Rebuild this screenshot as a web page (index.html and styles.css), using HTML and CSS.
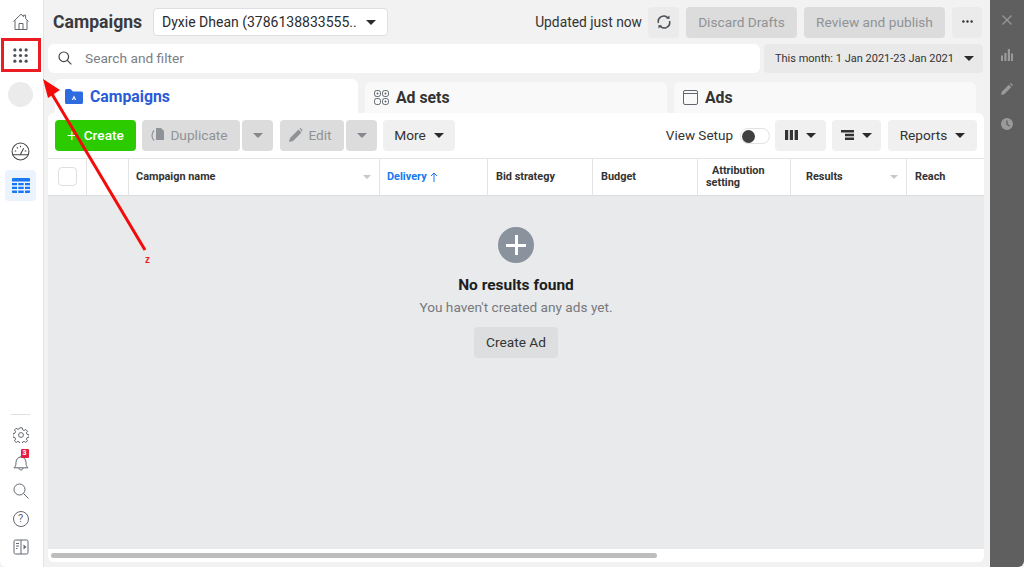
FILE: index.html
```html
<!DOCTYPE html>
<html lang="en">
<head>
<meta charset="utf-8">
<title>Campaigns</title>
<link rel="stylesheet" href="styles.css">
</head>
<body>
<div class="app">
  <nav class="rail">
    <div class="rail-top">
      <svg class="ic home" viewBox="0 0 18 18"><path d="M1.500 8.500 9 1.200l2.600 2.500V2.200h2v3.400l2.900 2.900M3 7.500v9h12v-9M7 16.500v-6h4v6" /></svg>
      <svg class="ic apps" viewBox="0 0 16 16"><g><circle cx="2" cy="2" r="1.700"/><circle cx="8" cy="2" r="1.700"/><circle cx="14" cy="2" r="1.700"/><circle cx="2" cy="8" r="1.700"/><circle cx="8" cy="8" r="1.700"/><circle cx="14" cy="8" r="1.700"/><circle cx="2" cy="14" r="1.700"/><circle cx="8" cy="14" r="1.700"/><circle cx="14" cy="14" r="1.700"/></g></svg>
      <div class="avatar"></div>
      <svg class="ic gauge" viewBox="0 0 18 18"><circle cx="9" cy="9" r="8"/><path d="M1.500 12h15M9 11.500 12 6M3.500 8.500h1.500M13 8.500h1.500M9 3.500V5M5.500 5l1 1"/></svg>
      <div class="rail-active">
        <svg class="table-ic" viewBox="0 0 18 15"><path d="M0 1a1 1 0 0 1 1-1h16a1 1 0 0 1 1 1v2.500H0zM0 5h5v2.300H0zM6.300 5h5.400v2.300H6.300zM13 5h5v2.300h-5zM0 8.800h5v2.300H0zM6.300 8.800h5.400v2.300H6.300zM13 8.800h5v2.300h-5zM0 12.600h5V15H1a1 1 0 0 1-1-1zM6.300 12.600h5.400V15H6.300zM13 12.600h5V14a1 1 0 0 1-1 1h-4z"/></svg>
      </div>
    </div>
    <div class="rail-bottom">
      <div class="rail-sep"></div>
      <svg class="ic small" viewBox="0 0 16 16"><circle cx="8" cy="8" r="2.400"/><path d="M6.800.8h2.400l.4 2 1.500.7 1.800-1 1.600 1.700-1.100 1.700.7 1.500 2 .4v2.400l-2 .4-.7 1.500 1.100 1.700-1.700 1.600-1.700-1-1.500.6-.4 2H6.800l-.4-2-1.500-.6-1.700 1-1.700-1.600 1.100-1.700-.7-1.500-2-.4V6.600l2-.4.7-1.500-1.100-1.700 1.600-1.700 1.800 1 1.500-.7z"/></svg>
      <div class="bell">
        <svg class="ic small" viewBox="0 0 16 16"><path d="M1 12.800c1.400-1.200 2-2.600 2-5.300C3 4.200 5.200 2 8 2s5 2.200 5 5.500c0 2.700.6 4.100 2 5.300zM6 13c0 1.200.9 2 2 2s2-.8 2-2M8 2V.8"/></svg>
        <span class="badge">3</span>
      </div>
      <svg class="ic small" viewBox="0 0 16 16"><circle cx="6.500" cy="6.500" r="5.500"/><path d="m10.500 10.500 5 5" /></svg>
      <div class="help">?</div>
      <svg class="ic small" viewBox="0 0 16 16"><rect x="1" y="1" width="14" height="14" rx="1.500"/><path d="M8 1v14M3 4.500h3M3 7h3M3 9.500h1.500"/><path class="fill" d="m10.500 5.500 3 2.500-3 2.500z"/></svg>
    </div>
  </nav>

  <main class="main">
    <header class="topbar">
      <h1 class="title">Campaigns</h1>
      <div class="account"><span class="account-name">Dyxie Dhean (3786138833555..</span><span class="caret dark"></span></div>
      <div class="top-actions">
        <span class="updated">Updated just now</span>
        <button class="btn btn-refresh"><svg class="refresh" viewBox="0 0 14 14"><path d="M1.500 8A5.500 5.500 0 0 1 11 3M12.500 6A5.500 5.500 0 0 1 3 11"/><path class="fill" d="m9 3.500 3.500.5V.6zM5 10.500 1.500 10v3.400z"/></svg></button>
        <button class="btn btn-disabled discard">Discard Drafts</button>
        <button class="btn btn-disabled review">Review and publish</button>
        <button class="btn btn-dots"><svg class="dots" viewBox="0 0 12 3"><circle cx="1.500" cy="1.500" r="1.300"/><circle cx="6" cy="1.500" r="1.300"/><circle cx="10.500" cy="1.500" r="1.300"/></svg></button>
      </div>
    </header>

    <div class="filterbar">
      <div class="search">
        <svg class="search-ic" viewBox="0 0 14 14"><circle cx="5.800" cy="5.800" r="4.800"/><path d="m9.300 9.300 4 4"/></svg>
        <span>Search and filter</span>
      </div>
      <div class="date"><span>This month: 1 Jan 2021-23 Jan 2021</span><span class="caret dark"></span></div>
    </div>

    <div class="tabs">
      <div class="tab tab-active">
        <svg class="tab-folder" viewBox="0 0 18 15"><path d="M0 1.500A1.500 1.500 0 0 1 1.500 0h4l2.500 2.500h8.500A1.500 1.500 0 0 1 18 4v9.500a1.500 1.500 0 0 1-1.500 1.500h-15A1.500 1.500 0 0 1 0 13.500z"/><path class="tab-a" d="m9 6.500 2.200 4.500h-1.300L9 9l-.9 2H6.800z"/></svg>
        <span>Campaigns</span>
      </div>
      <div class="tab">
        <svg class="tab-ic" viewBox="0 0 15 15"><rect x=".5" y=".5" width="6" height="6" rx="2.200"/><rect x="8.500" y=".5" width="6" height="6" rx="2.200"/><rect x=".5" y="8.500" width="6" height="6" rx="2.200"/><rect x="8.500" y="8.500" width="6" height="6" rx="2.200"/><circle class="fill" cx="3.500" cy="3.500" r="1"/><circle class="fill" cx="11.500" cy="3.500" r="1"/><circle class="fill" cx="11.500" cy="11.500" r="1"/></svg>
        <span>Ad sets</span>
      </div>
      <div class="tab">
        <svg class="tab-ic" viewBox="0 0 15 15"><rect x=".5" y=".5" width="14" height="14" rx="1.500"/><path d="M.5 3.500h14"/></svg>
        <span>Ads</span>
      </div>
    </div>

    <section class="panel">
      <div class="toolbar">
        <button class="btn btn-create"><span class="plus">+</span>Create</button>
        <div class="split">
          <button class="btn btn-disabled duplicate"><svg class="dup-ic" viewBox="0 0 14 14"><path class="fill" d="M5 0h5l3 3v9H5z"/><path d="M3 2.500C1.500 4 1 6 1 7.500s.5 3.500 2 5"/></svg>Duplicate</button>
          <button class="btn btn-disabled seg"><span class="caret grey"></span></button>
        </div>
        <div class="split split-edit">
          <button class="btn btn-disabled edit"><svg class="dup-ic" viewBox="0 0 14 14"><path class="fill" d="M0 14l1-4L9.500 1.500l3 3L4 13zM10.500.5l1-.5 2 2-.5 1.500z"/></svg>Edit</button>
          <button class="btn btn-disabled seg"><span class="caret grey"></span></button>
        </div>
        <button class="btn btn-light more">More<span class="caret dark"></span></button>
        <div class="toolbar-right">
          <span class="view-label">View Setup</span>
          <span class="toggle"><span class="knob"></span></span>
          <button class="btn btn-light cols"><svg class="col-ic" viewBox="0 0 13 10"><path d="M0 0h3.200v10H0zM4.800 0H8v10H4.800zM9.600 0H13v10H9.600z"/></svg><span class="caret dark"></span></button>
          <button class="btn btn-light cols bd"><svg class="col-ic" viewBox="0 0 13 10"><path d="M0 0h13v2.400H0zM4 3.800h9v2.400H4zM4 7.600h9V10H4z"/></svg><span class="caret dark"></span></button>
          <button class="btn btn-light reports">Reports<span class="caret dark"></span></button>
        </div>
      </div>

      <div class="thead">
        <div class="th th-check"><span class="checkbox"></span></div>
        <div class="th"></div>
        <div class="th th-sort"><span>Campaign name</span><span class="mini-caret"></span></div>
        <div class="th th-blue">Delivery <svg class="up" viewBox="0 0 8 10"><path d="M4 10V1M1 4l3-3 3 3"/></svg></div>
        <div class="th">Bid strategy</div>
        <div class="th">Budget</div>
        <div class="th th-wrap"><span class="attr">Attribution<br>setting</span></div>
        <div class="th th-sort th-results"><span>Results</span><span class="mini-caret"></span></div>
        <div class="th">Reach</div>
      </div>

      <div class="empty">
        <div class="empty-ic"></div>
        <h2 class="empty-title">No results found</h2>
        <p class="empty-sub">You haven't created any ads yet.</p>
        <button class="btn create-ad">Create Ad</button>
      </div>

      <div class="scroll"><div class="thumb"></div></div>
    </section>
  </main>

  <aside class="side">
    <svg class="side-ic" viewBox="0 0 12 12"><path class="stroke" d="m1.500 1.500 9 9M10.500 1.500l-9 9"/></svg>
    <svg class="side-ic" viewBox="0 0 12 12"><path d="M0 6.500h2V12H0zM3.300 4h2.200v8H3.300zM6.800 0H9v12H6.800zM10 4.500h2V12h-2z"/></svg>
    <svg class="side-ic" viewBox="0 0 12 12"><path d="M0 12l.8-3.200L7.800 1.800l2.400 2.400-7 7zM8.800.8 9.800 0 12 2.200l-.9 1z"/></svg>
    <svg class="side-ic" viewBox="0 0 12 12"><path fill-rule="evenodd" d="M6 0a6 6 0 1 1 0 12A6 6 0 0 1 6 0zM5.300 2.500v4l2.800 2 .8-1-2.300-1.600V2.500z"/></svg>
  </aside>
</div>

<div class="highlight"></div>
<svg class="arrow" viewBox="0 0 1024 567"><path class="arrow-line" d="M145 250 52 94"/><path class="arrow-head" d="M43 79 60 90 48 98z"/></svg>
<span class="z">z</span>
</body>
</html>
```
FILE: styles.css
```css
* { box-sizing: border-box; }
html, body { margin: 0; padding: 0; height: 100%; overflow: hidden; }
body { font-family: Roboto, "Liberation Sans", sans-serif; color: #1c1e21; background: #f2f2f2; }
button { font-family: inherit; border: 0; padding: 0; margin: 0; }
h1, h2, p { margin: 0; }
svg { display: block; }

.app { display: flex; width: 1024px; height: 567px; }

/* left rail */
.rail { width: 44px; flex: none; background: #fff; border-right: 1px solid #e4e4e4; border-radius: 0 0 0 6px; display: flex; flex-direction: column; justify-content: space-between; align-items: center; padding: 13px 2px 12px 0; }
.rail-top, .rail-bottom { display: flex; flex-direction: column; align-items: center; width: 100%; }
.ic { fill: none; stroke: #606770; stroke-width: 1; width: 18px; height: 18px; }
.ic .fill { fill: #606770; stroke: none; }
.apps { width: 15px; height: 15px; margin-top: 17px; fill: #4b4f56; stroke: none; }
.avatar { width: 25px; height: 25px; border-radius: 50%; background: #ebebeb; margin-top: 19px; }
.gauge { width: 19px; height: 19px; margin-top: 35px; stroke: #444; }
.rail-active { width: 31px; height: 31px; border-radius: 4px; background: #ebf3ff; margin-top: 9px; display: flex; align-items: center; justify-content: center; }
.table-ic { width: 18px; height: 15px; fill: #1877f2; }
.small { width: 16px; height: 16px; }
.rail-bottom { gap: 12px; }
.rail-sep { width: 19px; height: 1px; background: #dddfe2; }
.bell { position: relative; width: 16px; height: 16px; }
.badge { position: absolute; left: 8px; top: -6px; width: 8px; height: 9px; background: #e41e3f; color: #fff; font-size: 7px; line-height: 9px; font-weight: 700; text-align: center; border-radius: 1px; }
.help { width: 16px; height: 16px; border: 1px solid #606770; border-radius: 50%; font-size: 11px; line-height: 14px; text-align: center; color: #606770; }

/* main */
.main { flex: none; width: 946px; padding: 7px 6px 0 4px; display: flex; flex-direction: column; }
.topbar { display: flex; align-items: center; height: 30px; padding-left: 5px; }
.title { font-size: 17.600px; font-weight: 700; color: #3a3b3e; line-height: 30px; width: 100px; }
.account { width: 235px; height: 28px; background: #fff; border: 1px solid #dddfe2; border-radius: 4px; display: flex; align-items: center; justify-content: space-between; padding: 0 11px 0 8px; font-size: 14px; color: #2b2c2e; }
.account-name { white-space: nowrap; }
.top-actions { margin-left: auto; display: flex; align-items: center; gap: 7px; padding-right: 2px; }
.updated { font-size: 13.800px; color: #333; margin-right: -1px; padding-bottom: 1px; }
.btn { height: 31px; border-radius: 4px; font-size: 13.700px; padding-bottom: 1px; display: inline-flex; align-items: center; justify-content: center; }
.btn-refresh { width: 31px; height: 31px; background: #ebebeb; }
.refresh { width: 14px; height: 14px; fill: none; stroke: #4b4f56; stroke-width: 1.500; }
.refresh .fill { fill: #4b4f56; stroke: none; }
.btn-disabled { background: #dcdcdc; color: #8f9296; }
.discard { width: 111px; }
.review { width: 141px; }
.btn-dots { width: 30px; background: #ebebeb; }
.dots { width: 11px; height: 3px; fill: #333; }

.filterbar { display: flex; gap: 4px; margin-top: 7px; height: 29px; }
.search { width: 712px; background: #fff; border-radius: 6px; display: flex; align-items: center; padding: 0 0 1px 10px; font-size: 13.700px; color: #7b7e83; }
.search-ic { width: 14px; height: 14px; fill: none; stroke: #444; stroke-width: 1.200; margin-right: 13px; }
.date { width: 219px; background: #e9e9e9; border-radius: 4px; display: flex; align-items: center; justify-content: space-between; padding: 0 9px 1px 11px; font-size: 11px; color: #333; white-space: nowrap; }

.tabs { display: flex; gap: 7px; margin-top: 6px; padding-left: 7px; align-items: flex-end; height: 34px; }
.tab { width: 302px; height: 31px; background: #f9f9f9; border-radius: 6px 6px 0 0; display: flex; align-items: center; padding: 0 0 1px 9px; font-size: 15.800px; font-weight: 700; color: #333; gap: 7px; }
.tab-active { width: 303px; height: 34px; background: #fff; color: #2a5bd7; padding: 0 0 0 10px; gap: 7px; }
.tab-folder { width: 18px; height: 15px; fill: #2f6be0; }
.tab-a { fill: #fff; }
.tab-ic { width: 15px; height: 15px; fill: none; stroke: #606770; stroke-width: 1; }
.tab-ic .fill { fill: #606770; stroke: none; }

.panel { background: #fff; border-radius: 6px; height: 449px; display: flex; flex-direction: column; }
.toolbar { display: flex; align-items: center; gap: 6px; height: 45px; padding: 0 7px; }
.btn-create { width: 81px; background: #2ccb00; color: #fff; font-weight: 500; }
.plus { font-size: 17px; font-weight: 300; margin-right: 7px; line-height: 1; }
.split { display: flex; gap: 2px; }
.split-edit { margin-left: 1px; }
.duplicate { width: 98px; padding-right: 3px; }
.edit { width: 64px; padding-right: 3px; }
.seg { width: 31px; }
.dup-ic { width: 14px; height: 14px; margin-right: 5px; fill: none; stroke: #8f9296; stroke-width: 1.200; }
.dup-ic .fill { fill: #8f9296; stroke: none; }
.btn-light { background: #f0f0f0; color: #333; }
.more { width: 72px; gap: 8px; }
.toolbar-right { margin-left: auto; display: flex; align-items: center; }
.view-label { font-size: 13.500px; color: #333; padding-bottom: 1px; }
.toggle { width: 30px; height: 16px; border: 1px solid #e2e2e2; border-radius: 8px; margin: 0 5px 0 7px; position: relative; display: block; }
.knob { position: absolute; left: 1px; top: 1px; width: 13px; height: 13px; border-radius: 50%; background: #3f3f3f; }
.cols { width: 51px; gap: 8px; }
.bd { width: 49px; margin: 0 7px 0 6px; }
.col-ic { width: 13px; height: 10px; fill: #333; }
.reports { width: 89px; gap: 8px; }
.caret { display: inline-block; width: 0; height: 0; border-left: 5px solid transparent; border-right: 5px solid transparent; border-top: 5px solid #333; flex: none; }
.caret.dark { border-top-color: #2b2b2b; }
.caret.grey { border-top-color: #85888c; }

.thead { display: grid; grid-template-columns: 39px 42px 251px 108px 105px 105px 93px 116px 77px; height: 38px; border-top: 1px solid #e4e4e4; border-bottom: 1px solid #dcdcdc; }
.th { border-right: 1px solid #e4e4e4; display: flex; align-items: center; padding-left: 8px; padding-bottom: 1px; font-size: 10.900px; font-weight: 700; color: #333; white-space: nowrap; }
.th:last-child { border-right: 0; }
.th-check { padding-left: 10px; }
.checkbox { width: 19px; height: 19px; border: 1px solid #dddfe2; border-radius: 4px; }
.th-sort { justify-content: space-between; padding-left: 7px; padding-right: 8px; }
.th-results { padding-left: 15px; }
.mini-caret { width: 0; height: 0; border-left: 4px solid transparent; border-right: 4px solid transparent; border-top: 4px solid #c6c8cc; margin-top: 1px; }
.th-blue { color: #1877f2; gap: 3px; padding-left: 7px; }
.up { width: 8px; height: 10px; fill: none; stroke: #1877f2; stroke-width: 1; }
.th-wrap { line-height: 12px; }
.attr { display: block; text-indent: 6px; }

.empty { flex: 1; background: #e9eaeb; display: flex; flex-direction: column; align-items: center; padding-top: 31px; }
.empty-ic { width: 36px; height: 36px; border-radius: 50%; background: linear-gradient(#fff,#fff) center/20px 3px no-repeat, linear-gradient(#fff,#fff) center/3px 20px no-repeat, #8a929e; }
.empty-title { font-size: 15.500px; font-weight: 700; color: #1c1e21; margin-top: 13px; line-height: 19px; }
.empty-sub { font-size: 13.650px; color: #77797d; margin-top: 3px; line-height: 18px; }
.create-ad { width: 84px; height: 31px; margin-top: 11px; background: #dcdedf; color: #333; }

.scroll { height: 13px; padding: 4px 3px; border-radius: 0 0 6px 6px; }
.thumb { width: 606px; height: 5px; border-radius: 3px; background: #bdbdbd; }

/* right panel */
.side { flex: none; width: 34px; background: #5f5f5f; border-radius: 0 0 6px 0; display: flex; flex-direction: column; align-items: center; gap: 22.500px; padding-top: 14px; }
.side-ic { width: 12px; height: 12px; fill: #9a9a9a; }
.stroke { fill: none; stroke: #9a9a9a; stroke-width: 1.200; }

/* annotation */
.highlight { position: absolute; left: 1px; top: 38px; width: 40px; height: 34px; border: 3px solid #ec1c24; }
.arrow { position: absolute; left: 0; top: 0; width: 1024px; height: 567px; pointer-events: none; }
.arrow-line { fill: none; stroke: #f30b0b; stroke-width: 3; }
.arrow-head { fill: #f30b0b; }
.z { position: absolute; left: 145px; top: 254px; font-size: 10px; font-weight: 700; color: #ec1c24; font-family: "Liberation Sans", sans-serif; }
```
